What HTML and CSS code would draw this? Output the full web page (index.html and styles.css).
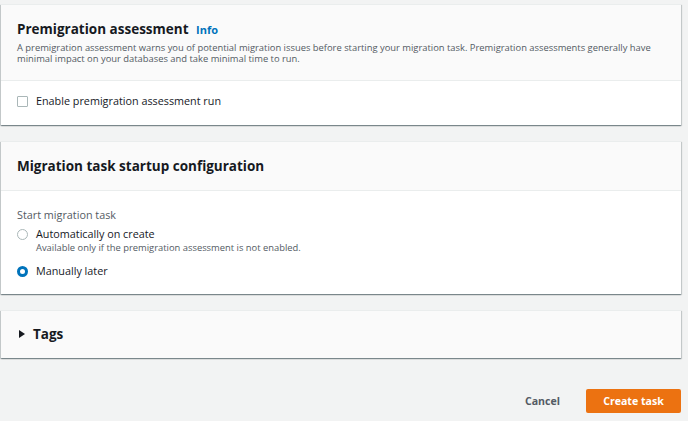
FILE: index.html
```html
<!DOCTYPE html>
<html>
<head>
<meta charset="utf-8">
<link rel="stylesheet" href="styles.css">
</head>
<body>
<div class="page">
  <section class="card">
    <div class="card-header">
      <h2 class="title">Premigration assessment <a class="info">Info</a></h2>
      <p class="desc">A premigration assessment warns you of potential migration issues before starting your migration task. Premigration assessments generally have minimal impact on your databases and take minimal time to run.</p>
    </div>
    <div class="card-body body-check">
      <label class="option">
        <span class="checkbox"></span>
        <span class="opt-label">Enable premigration assessment run</span>
      </label>
    </div>
  </section>

  <section class="card">
    <div class="card-header header-plain">
      <h2 class="title">Migration task startup configuration</h2>
    </div>
    <div class="card-body body-radio">
      <div class="field-label">Start migration task</div>
      <label class="option option-top">
        <span class="radio"></span>
        <span class="opt-text">
          <span class="opt-label">Automatically on create</span>
          <span class="opt-desc">Available only if the premigration assessment is not enabled.</span>
        </span>
      </label>
      <label class="option option-second">
        <span class="radio radio-on"></span>
        <span class="opt-label">Manually later</span>
      </label>
    </div>
  </section>

  <section class="card card-tags">
    <div class="tags-header">
      <span class="caret"></span>
      <h2 class="title tags-title">Tags</h2>
    </div>
  </section>

  <div class="actions">
    <button class="btn-link">Cancel</button>
    <button class="btn-primary">Create task</button>
  </div>
</div>
</body>
</html>
```
FILE: styles.css
```css
html, body {
  margin: 0;
  padding: 0;
  background: #f2f3f3;
}
body {
  font-family: "Open Sans", "Noto Sans", "Liberation Sans", sans-serif;
  color: #16191f;
  width: 688px;
  height: 421px;
  overflow: hidden;
}
.page {
  padding: 4px 7px 0 1px;
  display: flex;
  flex-direction: column;
}
.card {
  background: #fff;
  border-top: 1px solid #eaeded;
  box-shadow: 0 1px 1px 0 rgba(0, 28, 36, 0.3), 1px 1px 1px 0 rgba(0, 28, 36, 0.15), -1px 1px 1px 0 rgba(0, 28, 36, 0.15);
  margin-bottom: 16px;
}
.card-header {
  background: #fafafa;
  border-bottom: 1px solid #eaeded;
  padding: 14px 16px 16px;
}
.header-plain {
  padding: 14px 16px 14px;
}
.title {
  margin: 0;
  font-size: 13.5px;
  font-weight: 700;
  line-height: 20px;
}
.info {
  color: #0073bb;
  font-size: 11px;
  font-weight: 700;
  margin-left: 4px;
}
.desc {
  margin: 2px 0 0;
  font-size: 9.4px;
  line-height: 11px;
  color: #545b64;
}
.card-body {
  padding: 13px 16px 15px;
}
.body-check {
  padding: 13px 16px 17px;
}
.body-radio {
  padding: 17px 16px 16px;
}
.option {
  display: flex;
  align-items: flex-start;
  gap: 8px;
}
.checkbox {
  width: 9px;
  height: 9px;
  border: 1px solid #aab7b8;
  border-radius: 1px;
  margin-top: 2px;
  background: #fff;
  flex: none;
}
.opt-label {
  font-size: 10.8px;
  line-height: 14px;
}
.opt-text {
  display: flex;
  flex-direction: column;
}
.opt-desc {
  font-size: 9.4px;
  line-height: 13px;
  color: #545b64;
}
.field-label {
  font-size: 10.8px;
  line-height: 14px;
  color: #545b64;
  margin-bottom: 5px;
}
.radio {
  width: 9px;
  height: 9px;
  border: 1px solid #aab7b8;
  border-radius: 50%;
  margin-top: 2px;
  box-sizing: content-box;
  flex: none;
  background: #fff;
}
.radio-on {
  width: 5px;
  height: 5px;
  border: 3px solid #0073bb;
}
.option-second {
  margin-top: 10px;
}
.card-tags {
  background: #fafafa;
}
.tags-header {
  display: flex;
  align-items: center;
  gap: 8px;
  padding: 13px 16px 14px 18px;
}
.caret {
  width: 0;
  height: 0;
  border-top: 4px solid transparent;
  border-bottom: 4px solid transparent;
  border-left: 6px solid #16191f;
}
.tags-title {
  font-size: 13.5px;
}
.actions {
  display: flex;
  justify-content: flex-end;
  align-items: center;
  margin-top: 15px;
  gap: 26px;
}
.btn-link {
  background: none;
  border: none;
  font-family: inherit;
  font-size: 10.6px;
  font-weight: 700;
  color: #545b64;
  padding: 0;
}
.btn-primary {
  background: #ec7211;
  border: none;
  border-radius: 2px;
  color: #fff;
  font-family: inherit;
  font-size: 10.6px;
  font-weight: 700;
  width: 95px;
  height: 24px;
  padding: 0;
}
```
